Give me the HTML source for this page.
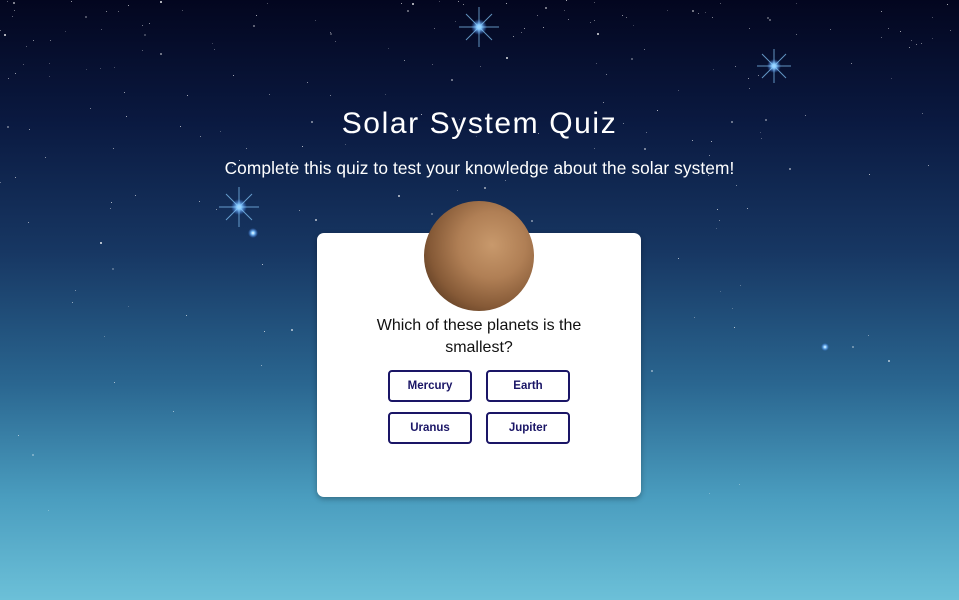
<!DOCTYPE html>
<html><head><meta charset="utf-8"><style>
html,body{margin:0;padding:0}
body{width:959px;height:600px;overflow:hidden;position:relative;font-family:"Liberation Sans",sans-serif;
background:linear-gradient(to bottom,#03061f 0%,#0a1940 20%,#173763 42%,#2a6690 64%,#4a9dbf 83%,#6cc0d8 100%);}
.star{position:absolute;border-radius:50%;background:#fff}
h1{position:absolute;top:107px;left:0;width:959px;margin:0;text-align:center;color:#fff;font-weight:normal;font-size:30px;letter-spacing:1.6px}
.sub{position:absolute;top:158px;left:0;width:959px;text-align:center;color:#fff;font-size:17.3px;letter-spacing:0.1px}
.card{position:absolute;left:317px;top:233px;width:324px;height:264px;background:#fff;border-radius:7px;box-shadow:0 2px 6px rgba(0,0,0,.3)}
.planet{position:absolute;left:424px;top:201px;width:110px;height:110px;border-radius:50%;
background:radial-gradient(circle at 62% 40%,#c8996c 0%,#b07f55 35%,#865a37 65%,#3a2312 100%)}
.q{position:absolute;left:317px;width:324px;top:315px;text-align:center;font-size:16px;line-height:22px;color:#111}
.b{position:absolute;width:84px;height:32px;border:2px solid #1a1566;border-radius:4px;box-sizing:border-box;text-align:center;line-height:28px;font-size:11.5px;font-weight:bold;color:#1a1566;background:#fff}
.sp{position:absolute}
</style></head><body>
<svg class="sp" style="left:454px;top:2px" width="50" height="50"><defs><radialGradient id="g"><stop offset="0" stop-color="#fff"/><stop offset=".3" stop-color="#8cf"/><stop offset="1" stop-color="#48f" stop-opacity="0"/></radialGradient></defs><circle cx="25" cy="25" r="8" fill="url(#g)"/><path d="M25 5V45M5 25H45M12 12L38 38M38 12L12 38" stroke="#8cf" stroke-width="1" opacity=".7"/></svg>
<svg class="sp" style="left:749px;top:41px" width="50" height="50"><circle cx="25" cy="25" r="7" fill="url(#g)"/><path d="M25 8V42M8 25H42M13 13L37 37M37 13L13 37" stroke="#8cf" stroke-width="1" opacity=".7"/></svg>
<svg class="sp" style="left:214px;top:182px" width="50" height="50"><circle cx="25" cy="25" r="8" fill="url(#g)"/><path d="M25 5V45M5 25H45M12 12L38 38M38 12L12 38" stroke="#8cf" stroke-width="1" opacity=".7"/></svg>
<svg class="sp" style="left:243px;top:223px" width="20" height="20"><circle cx="10" cy="10" r="5" fill="url(#g)"/></svg>
<svg class="sp" style="left:815px;top:337px" width="20" height="20"><circle cx="10" cy="10" r="4" fill="url(#g)"/></svg>
<div id="s"></div>
<script>
var s=document.getElementById('s'),seed=7;function r(){seed=(seed*9301+49297)%233280;return seed/233280}
for(var i=0;i<220;i++){var d=document.createElement('div');d.className='star';var z=r()<.85?1:2;d.style.cssText='left:'+Math.floor(r()*959)+'px;top:'+Math.floor(r()*r()*560)+'px;width:'+z+'px;height:'+z+'px;opacity:'+(0.3+r()*0.6);s.appendChild(d)}
</script>
<h1>Solar System Quiz</h1>
<div class="sub">Complete this quiz to test your knowledge about the solar system!</div>
<div class="card"></div>
<div class="planet"></div>
<div class="q">Which of these planets is the<br>smallest?</div>
<div class="b" style="left:388px;top:370px">Mercury</div>
<div class="b" style="left:486px;top:370px">Earth</div>
<div class="b" style="left:388px;top:412px">Uranus</div>
<div class="b" style="left:486px;top:412px">Jupiter</div>
</body></html>
